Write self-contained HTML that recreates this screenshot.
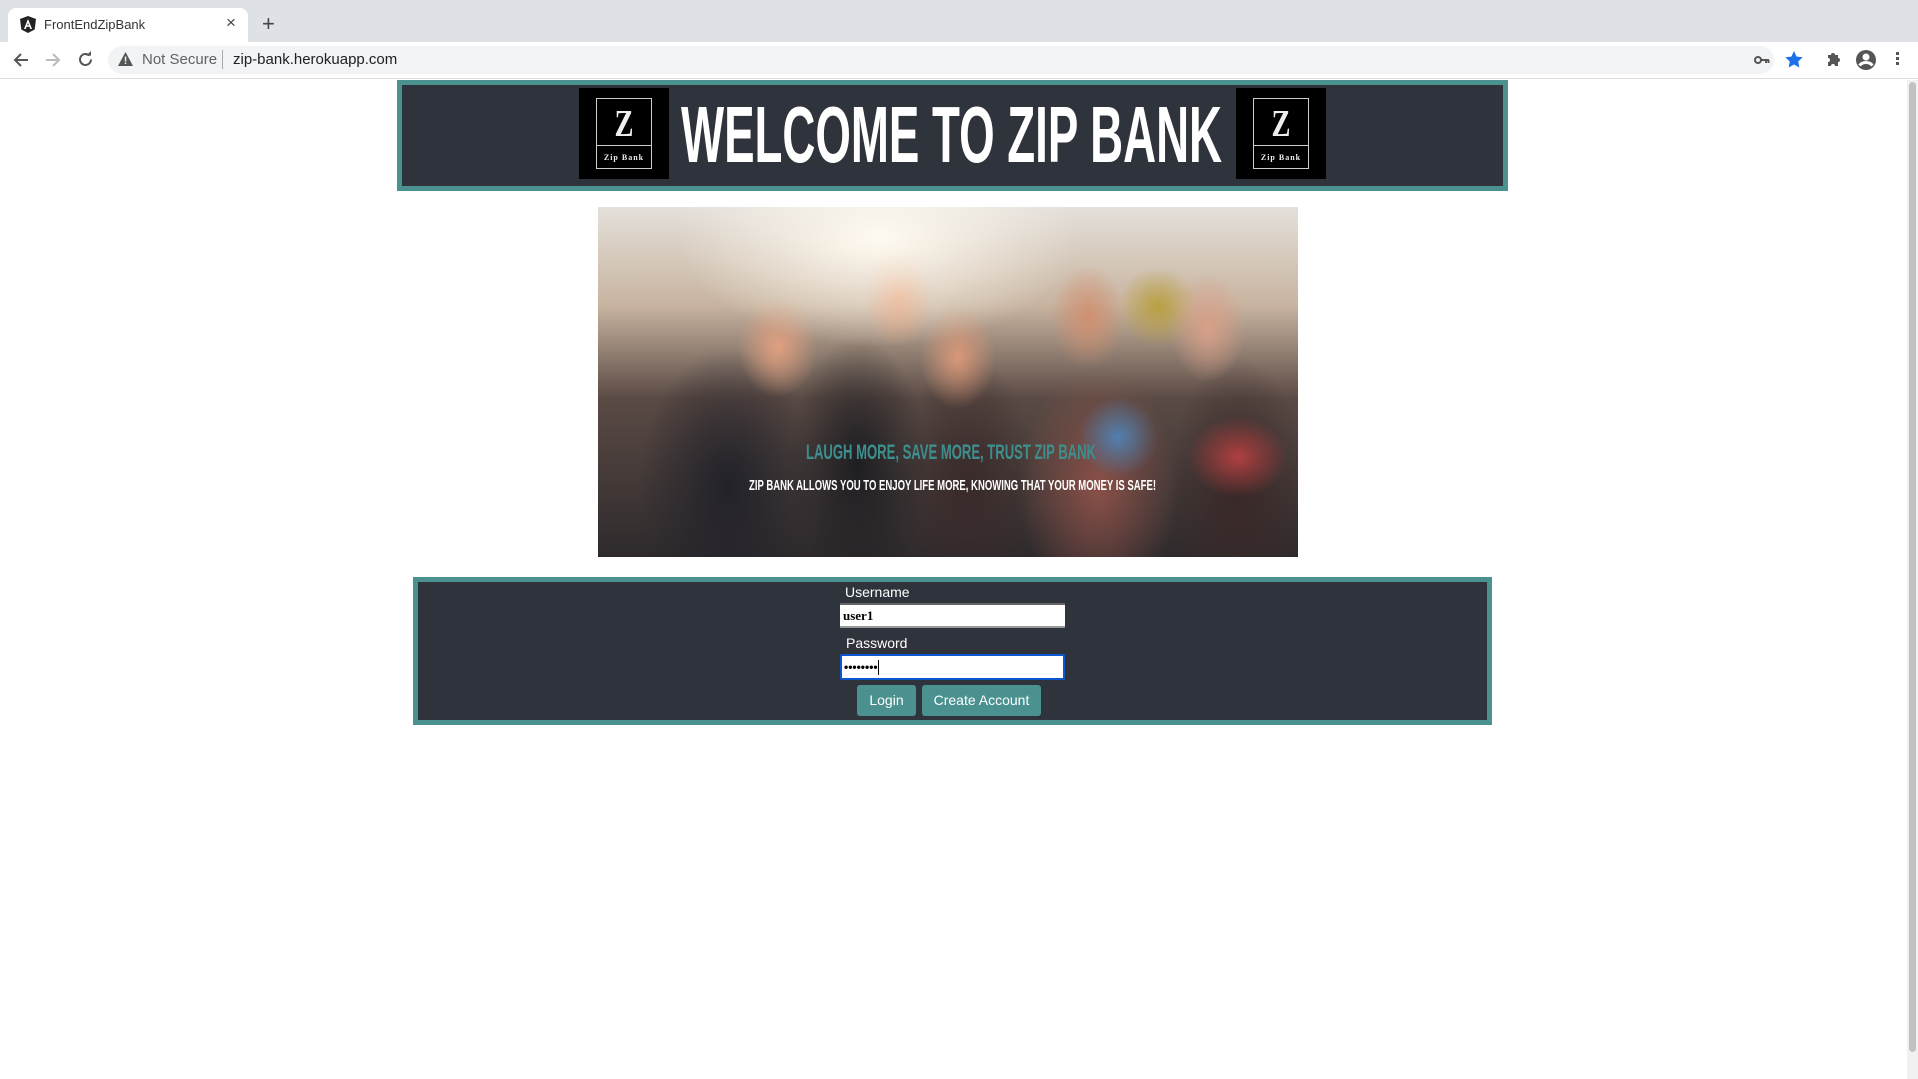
<!DOCTYPE html>
<html><head><meta charset="utf-8"><style>
*{margin:0;padding:0;box-sizing:border-box}
body{width:1918px;height:1079px;overflow:hidden;background:#fff;font-family:"Liberation Sans",sans-serif;position:relative}
.abs{position:absolute}
</style></head><body>
<!-- chrome -->
<div class="abs" style="left:0;top:0;width:1918px;height:42px;background:#dee1e6"></div>
<div class="abs" style="left:8px;top:8px;width:240px;height:34px;background:#fff;border-radius:8px 8px 0 0"></div>
<svg class="abs" style="left:20px;top:16px" width="16" height="17" viewBox="0 0 16 17"><path d="M8 0L16 3L14.7 13.5L8 17L1.3 13.5L0 3Z" fill="#222"/><path d="M8 3L4 13h1.7l.9-2.3h2.8l.9 2.3H12ZM7.1 9.3L8 7l.9 2.3Z" fill="#fff"/></svg>
<div class="abs" style="left:44px;top:17px;font-size:13px;color:#333">FrontEndZipBank</div>
<div class="abs" style="left:226px;top:13px;font-size:17px;color:#444">×</div>
<div class="abs" style="left:262px;top:11px;font-size:22px;color:#444">+</div>
<div class="abs" style="left:0;top:42px;width:1918px;height:37px;background:#fff;border-bottom:1px solid #dadce0"></div>
<svg class="abs" style="left:13px;top:52px" width="16" height="16"><path d="M15 8H2M8 2L2 8l6 6" stroke="#555" stroke-width="2" fill="none"/></svg>
<svg class="abs" style="left:45px;top:52px" width="16" height="16"><path d="M1 8h13M8 2l6 6-6 6" stroke="#bbb" stroke-width="2" fill="none"/></svg>
<svg class="abs" style="left:77px;top:51px" width="17" height="17"><path d="M14 8.5A5.5 5.5 0 1 1 12.4 4.6" stroke="#555" stroke-width="2" fill="none"/><path d="M9 4.6h5V0Z" fill="#555"/></svg>
<div class="abs" style="left:108px;top:46px;width:1666px;height:28px;background:#f1f3f4;border-radius:14px"></div>
<svg class="abs" style="left:118px;top:52px" width="15" height="14"><path d="M7.5 0L15 14H0Z" fill="#555"/><rect x="6.8" y="4.5" width="1.5" height="5" fill="#f1f3f4"/><rect x="6.8" y="10.5" width="1.5" height="1.5" fill="#f1f3f4"/></svg>
<div class="abs" style="left:142px;top:51px;font-size:15px;color:#5f6368">Not Secure</div>
<div class="abs" style="left:222px;top:50px;width:1px;height:19px;background:#aaa"></div>
<div class="abs" style="left:233px;top:51px;font-size:15px;color:#202124">zip-bank.herokuapp.com</div>
<svg class="abs" style="left:1754px;top:55px" width="16" height="10"><circle cx="4" cy="5" r="3" fill="none" stroke="#555" stroke-width="2"/><path d="M7 5h8M12 5v3M14.5 5v3" stroke="#555" stroke-width="2"/></svg>
<svg class="abs" style="left:1785px;top:51px" width="18" height="17"><path d="M9 0l2.6 5.6 6.1.7-4.5 4.2 1.2 6L9 13.5 3.6 16.5l1.2-6L.3 6.3l6.1-.7Z" fill="#1a73e8"/></svg>
<svg class="abs" style="left:1826px;top:51px" width="16" height="16"><path d="M2 4h3a2 2 0 014 0h3v3a2 2 0 010 4v4H9a2 2 0 00-4 0H2v-4a2 2 0 000-4Z" fill="#555"/></svg>
<svg class="abs" style="left:1855px;top:49px" width="22" height="22"><circle cx="11" cy="11" r="10" fill="#555"/><circle cx="11" cy="8" r="3.5" fill="#fff"/><path d="M4.5 16.5c3-4 10-4 13 0" stroke="#fff" stroke-width="3" fill="none"/></svg>
<div class="abs" style="left:1896px;top:52px;width:3px;height:3px;background:#555;box-shadow:0 5px #555,0 10px #555"></div>
<div class="abs" style="left:1907px;top:80px;width:11px;height:999px;background:#f1f1f1"></div>
<div class="abs" style="left:1909px;top:82px;width:7px;height:970px;background:#c1c1c1;border-radius:4px"></div>

<!-- header -->
<div class="abs" style="left:397px;top:80px;width:1111px;height:111px;background:#2f333b;border:5px solid #4a9190"></div>
<div class="abs" style="left:579px;top:88px;width:90px;height:91px;background:#000"><div style="position:absolute;left:17px;top:10px;width:56px;height:71px;border:1px solid #ccc"></div><div style="position:absolute;left:17px;top:57px;width:56px;height:1px;background:#ccc"></div><div style="position:absolute;left:0;width:90px;top:14px;text-align:center;color:#eee;font:bold 38px 'Liberation Serif',serif;transform:scaleX(.75)">Z</div><div style="position:absolute;left:0;width:90px;top:65px;text-align:center;color:#eee;font:bold 8px 'Liberation Serif',serif;letter-spacing:1px">Zip Bank</div></div>
<div class="abs" style="left:1236px;top:88px;width:90px;height:91px;background:#000"><div style="position:absolute;left:17px;top:10px;width:56px;height:71px;border:1px solid #ccc"></div><div style="position:absolute;left:17px;top:57px;width:56px;height:1px;background:#ccc"></div><div style="position:absolute;left:0;width:90px;top:14px;text-align:center;color:#eee;font:bold 38px 'Liberation Serif',serif;transform:scaleX(.75)">Z</div><div style="position:absolute;left:0;width:90px;top:65px;text-align:center;color:#eee;font:bold 8px 'Liberation Serif',serif;letter-spacing:1px">Zip Bank</div></div>
<svg class="abs" style="left:681px;top:96px" width="542" height="75"><text x="0" y="66" textLength="541" lengthAdjust="spacingAndGlyphs" font-family="Liberation Sans Narrow, Liberation Sans, sans-serif" font-weight="bold" font-size="80" fill="#fff">WELCOME TO ZIP BANK</text></svg>

<!-- photo -->
<div class="abs" style="left:598px;top:207px;width:700px;height:350px;overflow:hidden;background:
radial-gradient(ellipse 200px 110px at 280px 30px,#fffaf0,rgba(255,240,210,0) 100%),
radial-gradient(ellipse 40px 50px at 180px 140px,#e0a080,rgba(0,0,0,0) 100%),
radial-gradient(ellipse 35px 50px at 300px 90px,#e09870,rgba(0,0,0,0) 100%),
radial-gradient(ellipse 38px 52px at 360px 150px,#d89878,rgba(0,0,0,0) 100%),
radial-gradient(ellipse 38px 52px at 490px 110px,#d09070,rgba(0,0,0,0) 100%),
radial-gradient(ellipse 38px 55px at 610px 120px,#d8a088,rgba(0,0,0,0) 100%),
radial-gradient(ellipse 40px 40px at 560px 100px,#b8a040,rgba(0,0,0,0) 100%),
radial-gradient(ellipse 40px 40px at 520px 230px,#5080b0,rgba(0,0,0,0) 100%),
radial-gradient(ellipse 50px 40px at 640px 250px,#b04040,rgba(0,0,0,0) 100%),
radial-gradient(ellipse 90px 140px at 130px 280px,#22222a,rgba(0,0,0,0) 100%),
radial-gradient(ellipse 70px 130px at 260px 260px,#1e1e22,rgba(0,0,0,0) 100%),
radial-gradient(ellipse 80px 120px at 500px 280px,#8a5048,rgba(0,0,0,0) 100%),
radial-gradient(ellipse 70px 130px at 370px 280px,#3a2a2a,rgba(0,0,0,0) 100%),
radial-gradient(ellipse 70px 140px at 640px 290px,#3a2828,rgba(0,0,0,0) 100%),
linear-gradient(180deg,#e4e0da 0%,#c8b4a0 28%,#5a4a44 55%,#2e2a2c 100%)"></div>
<svg class="abs" style="left:598px;top:207px" width="700" height="350"><text x="208" y="252" textLength="290" lengthAdjust="spacingAndGlyphs" font-family="Liberation Sans Narrow, Liberation Sans, sans-serif" font-weight="bold" font-size="21" fill="#3d8f8e">LAUGH MORE, SAVE MORE, TRUST ZIP BANK</text><text x="151" y="283" textLength="407" lengthAdjust="spacingAndGlyphs" font-family="Liberation Sans Narrow, Liberation Sans, sans-serif" font-weight="bold" font-size="15" fill="#fff">ZIP BANK ALLOWS YOU TO ENJOY LIFE MORE, KNOWING THAT YOUR MONEY IS SAFE!</text></svg>

<!-- login -->
<div class="abs" style="left:413px;top:577px;width:1079px;height:148px;background:#2f333b;border:5px solid #4a9190"></div>
<div class="abs" style="left:845px;top:584px;font-size:14px;color:#fff">Username</div>
<div class="abs" style="left:840px;top:603px;width:225px;height:25px;background:#fff;border-top:2px solid #666;border-bottom:2px solid #999;font:bold 13px 'Liberation Serif',serif;padding:3px 3px;color:#000">user1</div>
<div class="abs" style="left:846px;top:635px;font-size:14px;color:#fff">Password</div>
<div class="abs" style="left:840px;top:654px;width:225px;height:26px;background:#fff;border:2px solid #0b57d0;border-radius:2px;font:bold 12px sans-serif;padding:4px 2px;color:#000">••••••••<span style="display:inline-block;width:1px;height:15px;background:#000;vertical-align:middle"></span></div>
<div class="abs" style="left:857px;top:685px;width:59px;height:31px;background:#4a9190;border-radius:3px;color:#fff;font-size:14px;text-align:center;line-height:31px">Login</div>
<div class="abs" style="left:922px;top:685px;width:119px;height:31px;background:#4a9190;border-radius:3px;color:#fff;font-size:14px;text-align:center;line-height:31px">Create Account</div>
</body></html>
